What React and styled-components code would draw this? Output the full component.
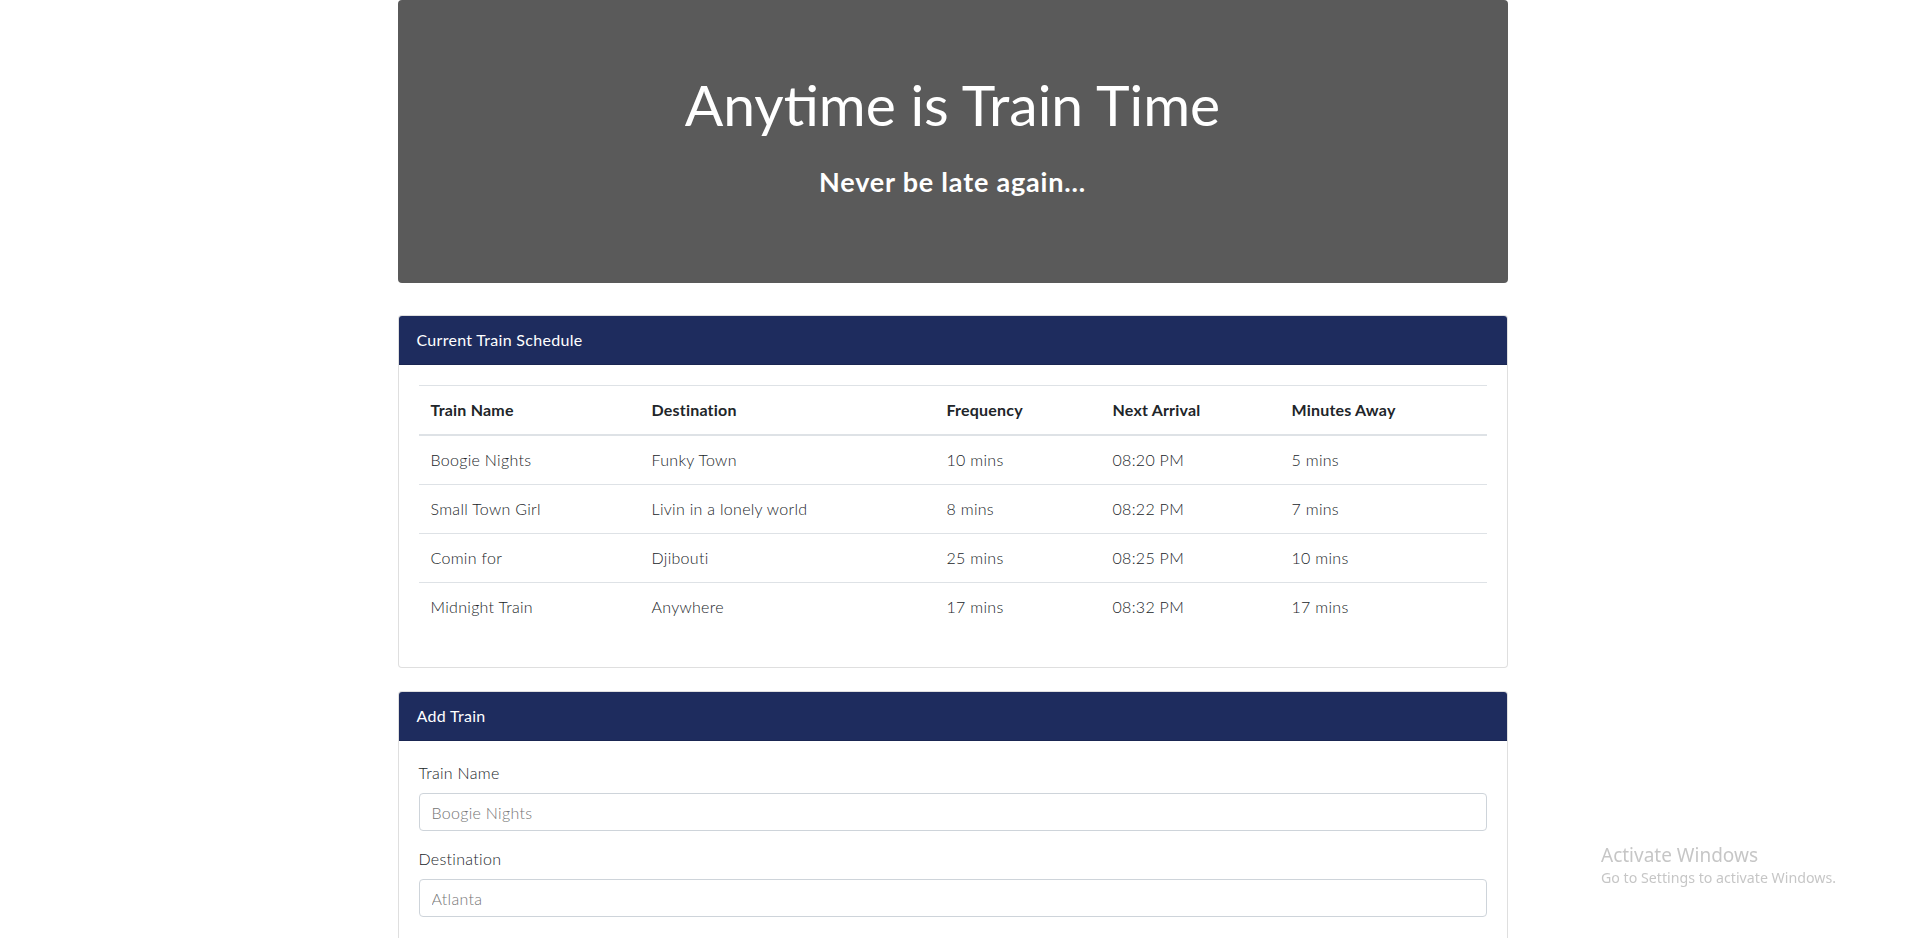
import React from 'react';
import styled, { createGlobalStyle } from 'styled-components';

const GlobalStyle = createGlobalStyle`
    html {
        scrollbar-width: none;
    }
    html::-webkit-scrollbar {
        display: none;
    }
    body {
        margin: 0;
        font-family: Lato, "Noto Sans", sans-serif;
        font-size: 16px;
        line-height: 1.5;
        color: #212529;
        background-color: #fff;
    }
    *, *::before, *::after {
        box-sizing: border-box;
    }
`

const Container = styled.div`
    max-width: 1140px;
    margin: 0 auto;
    padding: 0 15px;
`

const Jumbotron = styled.header`
    display: flex;
    flex-direction: column;
    align-items: center;
    height: 283px;
    padding: 71px 32px 0;
    margin-bottom: 32px;
    background-color: rgb(90, 90, 90);
    border-radius: 4px;
    color: #fff;
    text-align: center;
`

const Title = styled.h1`
    margin: 0 0 29px;
    font-size: 57px;
    font-weight: 400;
    line-height: 67px;
`

const Subtitle = styled.h4`
    margin: 0;
    font-size: 27px;
    font-weight: 700;
    line-height: 29px;
    letter-spacing: 0.8px;
`

const Card = styled.section`
    display: flex;
    flex-direction: column;
    margin-bottom: 23px;
    border: 1px solid rgba(0, 0, 0, 0.125);
    border-radius: 4px;
    background-color: #fff;
`

const CardHeader = styled.div`
    padding: 12px 18px;
    background-color: rgb(30, 44, 94);
    color: #fff;
    border-bottom: 1px solid rgba(0, 0, 0, 0.125);
    border-radius: 3px 3px 0 0;
    line-height: 24px;
    letter-spacing: 0.3px;
`

const CardBody = styled.div`
    padding: 20px;
`

const Table = styled.table`
    width: 100%;
    margin-bottom: 16px;
    border-collapse: collapse;
    color: #212529;
`

const Th = styled.th`
    width: ${p => p.$w}px;
    padding: 12px;
    text-align: left;
    font-weight: 700;
    line-height: 24px;
    letter-spacing: 0.2px;
    border-top: 1px solid #dee2e6;
    border-bottom: 2px solid #dee2e6;
`

const Td = styled.td`
    padding: 12px;
    font-weight: 300;
    line-height: 24px;
    letter-spacing: 0.3px;
    border-top: 1px solid #dee2e6;
    color: #212529;
`

const FormGroup = styled.div`
    display: flex;
    flex-direction: column;
    margin-bottom: 16px;
`

const Label = styled.label`
    margin-bottom: 8px;
    font-weight: 300;
    line-height: 24px;
    letter-spacing: 0.3px;
    color: #212529;
`

const Input = styled.input`
    height: 38px;
    padding: 6px 12px;
    font-family: inherit;
    font-size: 16px;
    font-weight: 300;
    line-height: 24px;
    letter-spacing: 0.3px;
    color: #495057;
    border: 1px solid #ced4da;
    border-radius: 4px;
    background-color: #fff;

    ::placeholder {
        color: #6c757d;
    }
`

const SubmitBtn = styled.button`
    align-self: flex-start;
    padding: 6px 12px;
    font-family: inherit;
    font-size: 16px;
    line-height: 24px;
    color: #fff;
    border: 1px solid rgb(30, 44, 94);
    border-radius: 4px;
    background-color: rgb(30, 44, 94);
`

const Watermark = styled.div`
    position: fixed;
    right: 69px;
    bottom: 50px;
    font-family: "Noto Sans", "Open Sans", sans-serif;
    color: rgba(160, 160, 160, 0.6);
    pointer-events: none;
`

const WatermarkTitle = styled.div`
    font-size: 19px;
    line-height: 26px;
`

const WatermarkText = styled.div`
    font-size: 14.2px;
    line-height: 20px;
`

const columns = [
    { name: 'Train Name', w: 221 },
    { name: 'Destination', w: 295 },
    { name: 'Frequency', w: 166 },
    { name: 'Next Arrival', w: 179 },
    { name: 'Minutes Away', w: 207 },
]

const trains = [
    ['Boogie Nights', 'Funky Town', '10 mins', '08:20 PM', '5 mins'],
    ['Small Town Girl', 'Livin in a lonely world', '8 mins', '08:22 PM', '7 mins'],
    ['Comin for', 'Djibouti', '25 mins', '08:25 PM', '10 mins'],
    ['Midnight Train', 'Anywhere', '17 mins', '08:32 PM', '17 mins'],
]

const fields = [
    { label: 'Train Name', placeholder: 'Boogie Nights' },
    { label: 'Destination', placeholder: 'Atlanta' },
    { label: 'First Train Time (HH:mm - military time)', placeholder: '05:35' },
    { label: 'Frequency (min)', placeholder: '15' },
]

export default function App() {
    return (
        <>
            <GlobalStyle />
            <Container>
                <Jumbotron>
                    <Title>Anytime is Train Time</Title>
                    <Subtitle>Never be late again...</Subtitle>
                </Jumbotron>

                <Card>
                    <CardHeader>Current Train Schedule</CardHeader>
                    <CardBody>
                        <Table>
                            <thead>
                                <tr>
                                    {columns.map(c => (
                                        <Th key={c.name} $w={c.w}>{c.name}</Th>
                                    ))}
                                </tr>
                            </thead>
                            <tbody>
                                {trains.map(row => (
                                    <tr key={row[0]}>
                                        {row.map((cell, i) => (
                                            <Td key={i}>{cell}</Td>
                                        ))}
                                    </tr>
                                ))}
                            </tbody>
                        </Table>
                    </CardBody>
                </Card>

                <Card>
                    <CardHeader>Add Train</CardHeader>
                    <CardBody>
                        <form onSubmit={e => e.preventDefault()}>
                            {fields.map(f => (
                                <FormGroup key={f.label}>
                                    <Label>{f.label}</Label>
                                    <Input type="text" placeholder={f.placeholder} />
                                </FormGroup>
                            ))}
                            <SubmitBtn type="submit">Submit</SubmitBtn>
                        </form>
                    </CardBody>
                </Card>
            </Container>

            <Watermark>
                <WatermarkTitle>Activate Windows</WatermarkTitle>
                <WatermarkText>Go to Settings to activate Windows.</WatermarkText>
            </Watermark>
        </>
    )
}
